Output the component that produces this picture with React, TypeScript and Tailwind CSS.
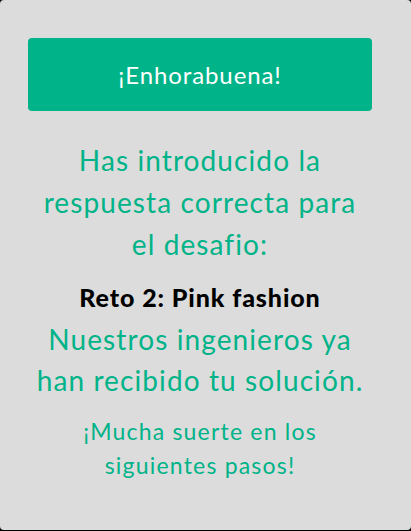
export default function App() {
  return (
    <div className="w-[411px] h-[531px] bg-black">
      <div
        className="h-[530px] bg-[#dcdcdc] rounded-[4px] pl-[28px] pt-[38px] flex flex-col items-start"
        style={{ fontFamily: "Lato, 'Open Sans', sans-serif" }}
      >
        <div className="w-[344px] flex flex-col items-center text-center">
          <div className="w-full h-[73px] rounded-[4px] bg-[#00b388] flex items-center justify-center text-white text-[24px] tracking-[0.9px]">
            ¡Enhorabuena!
          </div>
          <p className="mt-[28px] text-[#00b388] text-[28px] leading-[42px] tracking-[1.1px] whitespace-nowrap">
            Has introducido la<br />respuesta correcta para<br />el desafio:
          </p>
          <p className="mt-[17px] text-black font-black text-[25px] leading-[30px] tracking-[0.9px] whitespace-nowrap">
            Reto 2: Pink fashion
          </p>
          <p className="mt-[7px] text-[#00b388] text-[28px] leading-[41px] tracking-[1.1px] whitespace-nowrap">
            Nuestros ingenieros ya<br />han recibido tu solución.
          </p>
          <p className="mt-[13px] text-[#00b388] text-[23px] leading-[34px] tracking-[1.2px] whitespace-nowrap">
            ¡Mucha suerte en los<br />siguientes pasos!
          </p>
        </div>
      </div>
    </div>
  );
}
